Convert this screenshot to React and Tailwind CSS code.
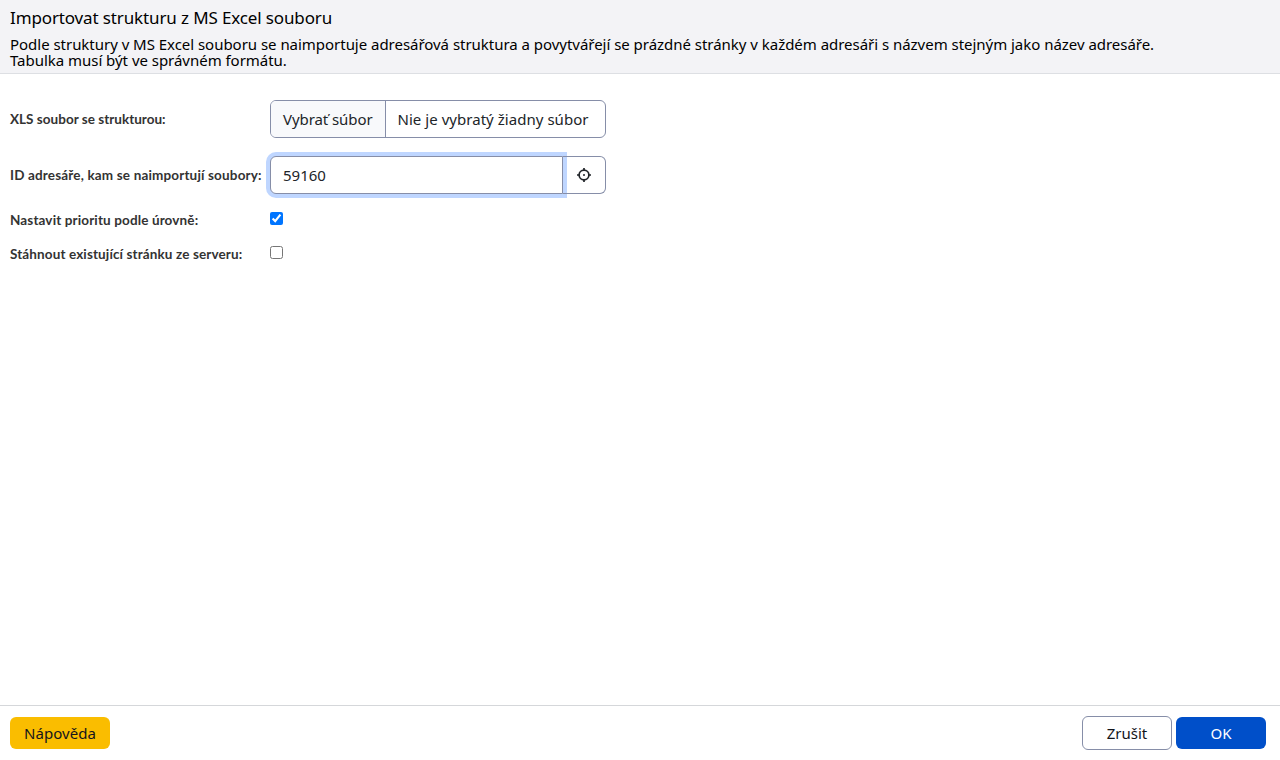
import React from 'react';

function FieldRow({ label, labelClass, className, children }) {
  return (
    <div className={`flex ${className}`}>
      <label className="flex w-[260px] shrink-0 items-center whitespace-nowrap font-['Lato',sans-serif] text-[13.5px] leading-4 font-bold text-[#333333]">
        <span className={labelClass}>{label}</span>
      </label>
      {children}
    </div>
  );
}

function CrosshairIcon() {
  return (
    <svg width="16" height="16" viewBox="0 0 16 16" fill="none" stroke="#212529" strokeWidth="1.7">
      <circle cx="8" cy="8" r="4.9" />
      <path d="M8 1v2.2M8 12.8V15M1 8h2.2M12.8 8H15" />
      <circle cx="8" cy="8" r="1" fill="#212529" stroke="none" />
    </svg>
  );
}

export default function App() {
  return (
    <div className="flex h-[760px] w-[1280px] flex-col overflow-hidden bg-white font-['Noto_Sans',sans-serif] text-[15px] text-[#212529]">
      <header className="h-[74px] shrink-0 border-b border-[#dddfe3] bg-[#f3f3f6] px-[10px] pt-[7px] text-black">
        <h1 className="whitespace-nowrap text-[17px] leading-[22px] tracking-[-0.13px]">Importovat strukturu z MS Excel souboru</h1>
        <p className="mt-[7px] whitespace-nowrap leading-4 tracking-[-0.03px]">
          Podle struktury v MS Excel souboru se naimportuje adresářová struktura a povytvářejí se prázdné stránky v každém adresáři s názvem stejným jako název adresáře.
          <br />
          Tabulka musí být ve správném formátu.
        </p>
      </header>

      <main className="flex-1 px-[10px] pt-[26px]">
        <FieldRow label="XLS soubor se strukturou:" labelClass="tracking-[0.02px]" className="h-[38px]">
          <div className="flex w-[336px] overflow-hidden rounded-md border border-[#868ea8] whitespace-nowrap">
            <button type="button" className="flex w-[115px] shrink-0 items-center border-r border-[#868ea8] bg-[#f8f9fb] pl-3 tracking-[-0.08px]">Vybrať súbor</button>
            <div className="flex items-center pl-[11.5px] tracking-[0.04px]">Nie je vybratý žiadny súbor</div>
          </div>
        </FieldRow>
        <FieldRow label="ID adresáře, kam se naimportují soubory:" labelClass="tracking-[0.16px]" className="mt-[18px] h-[38px]">
          <div className="flex w-[293px] items-center rounded-l-md border border-[#868ea8] bg-white pl-3 shadow-[0_0_0_4px_#bfd6ff]">59160</div>
          <button type="button" className="flex w-[43px] items-center justify-center rounded-r-md border border-l-0 border-[#868ea8]"><CrosshairIcon /></button>
        </FieldRow>
        <FieldRow label="Nastavit prioritu podle úrovně:" labelClass="tracking-[0.13px]" className="mt-[18px] h-4">
          <input type="checkbox" defaultChecked className="h-[13px] w-[13px]" />
        </FieldRow>
        <FieldRow label="Stáhnout existující stránku ze serveru:" labelClass="tracking-[0.12px]" className="mt-[18px] h-4">
          <input type="checkbox" className="h-[13px] w-[13px]" />
        </FieldRow>
      </main>

      <footer className="flex h-[55px] shrink-0 items-center justify-between border-t border-[#d5d7da] pr-[14px] pl-[10px]">
        <button type="button" className="h-8 w-[100px] rounded-md bg-[#fabd00] text-[#15151d] tracking-[0.05px]">Nápověda</button>
        <div className="flex items-center gap-1">
          <button type="button" className="h-[34px] w-[90px] rounded-md border border-[#868ea8] bg-white text-[#13151b]">Zrušit</button>
          <button type="button" className="h-8 w-[90px] rounded-md bg-[#004fc9] text-white">OK</button>
        </div>
      </footer>
    </div>
  );
}
